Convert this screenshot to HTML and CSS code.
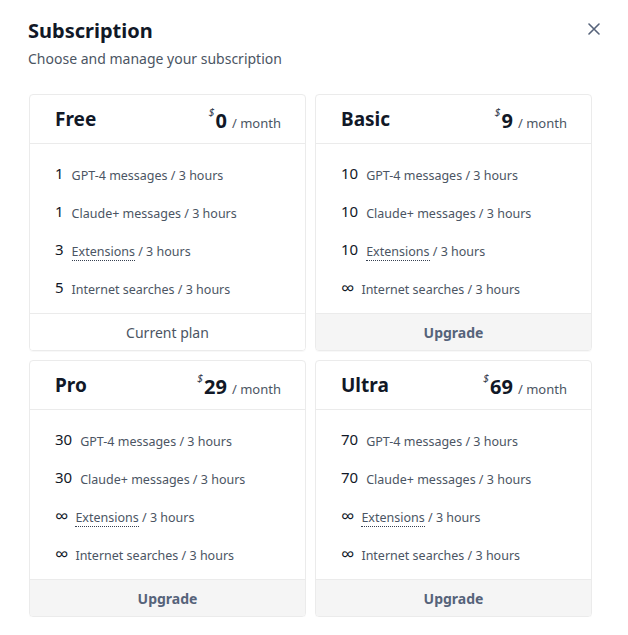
FILE: index.html
```html
<!DOCTYPE html>
<html lang="en">
<head>
<meta charset="utf-8">
<title>Subscription</title>
<link rel="stylesheet" href="styles.css">
</head>
<body>
<div class="modal">
  <div class="top">
    <div>
      <h1 class="title">Subscription</h1>
      <p class="subtitle">Choose and manage your subscription</p>
    </div>
    <button class="close" aria-label="Close">
      <svg width="12" height="12" viewBox="0 0 12 12"><path d="M1 1L11 11M11 1L1 11" stroke="#56637a" stroke-width="1.6" stroke-linecap="round"/></svg>
    </button>
  </div>
  <div class="plans">
    <div class="card">
      <div class="card-head"><span class="plan">Free</span><span class="price"><sup>$</sup><b>0</b> <span class="per">/ month</span></span></div>
      <ul class="features">
        <li><span class="num">1</span><span class="txt">GPT-4 messages / 3 hours</span></li>
        <li><span class="num">1</span><span class="txt">Claude+ messages / 3 hours</span></li>
        <li><span class="num">3</span><span class="txt"><span class="dot">Extensions</span> / 3 hours</span></li>
        <li><span class="num">5</span><span class="txt">Internet searches / 3 hours</span></li>
      </ul>
      <div class="card-foot current">Current plan</div>
    </div>
    <div class="card">
      <div class="card-head"><span class="plan">Basic</span><span class="price"><sup>$</sup><b>9</b> <span class="per">/ month</span></span></div>
      <ul class="features">
        <li><span class="num">10</span><span class="txt">GPT-4 messages / 3 hours</span></li>
        <li><span class="num">10</span><span class="txt">Claude+ messages / 3 hours</span></li>
        <li><span class="num">10</span><span class="txt"><span class="dot">Extensions</span> / 3 hours</span></li>
        <li><span class="num inf">∞</span><span class="txt">Internet searches / 3 hours</span></li>
      </ul>
      <div class="card-foot upgrade">Upgrade</div>
    </div>
    <div class="card">
      <div class="card-head"><span class="plan">Pro</span><span class="price"><sup>$</sup><b>29</b> <span class="per">/ month</span></span></div>
      <ul class="features">
        <li><span class="num">30</span><span class="txt">GPT-4 messages / 3 hours</span></li>
        <li><span class="num">30</span><span class="txt">Claude+ messages / 3 hours</span></li>
        <li><span class="num inf">∞</span><span class="txt"><span class="dot">Extensions</span> / 3 hours</span></li>
        <li><span class="num inf">∞</span><span class="txt">Internet searches / 3 hours</span></li>
      </ul>
      <div class="card-foot upgrade">Upgrade</div>
    </div>
    <div class="card">
      <div class="card-head"><span class="plan">Ultra</span><span class="price"><sup>$</sup><b>69</b> <span class="per">/ month</span></span></div>
      <ul class="features">
        <li><span class="num">70</span><span class="txt">GPT-4 messages / 3 hours</span></li>
        <li><span class="num">70</span><span class="txt">Claude+ messages / 3 hours</span></li>
        <li><span class="num inf">∞</span><span class="txt"><span class="dot">Extensions</span> / 3 hours</span></li>
        <li><span class="num inf">∞</span><span class="txt">Internet searches / 3 hours</span></li>
      </ul>
      <div class="card-foot upgrade">Upgrade</div>
    </div>
  </div>
</div>
</body>
</html>
```
FILE: styles.css
```css
* { box-sizing: border-box; }
body {
  margin: 0;
  background: #fff;
  font-family: "Noto Sans", "Open Sans", sans-serif;
  color: #111827;
}
.modal {
  padding: 17px 28px 0 28px;
  width: 628px;
}
.top {
  display: flex;
  justify-content: space-between;
  align-items: flex-start;
}
.title {
  margin: 0;
  font-size: 20px;
  line-height: 28px;
  font-weight: 700;
  color: #111827;
}
.subtitle {
  margin: 2px 0 0;
  font-size: 14px;
  line-height: 24px;
  color: #4b5563;
}
.close {
  border: 0;
  background: none;
  padding: 0;
  margin: 6px 0 0 0;
  width: 12px;
  height: 12px;
  display: flex;
}
.plans {
  margin-top: 23px;
  display: grid;
  grid-template-columns: 277px 277px;
  gap: 9px 9px;
  padding-left: 1px;
}
.card {
  border: 1px solid #ebebeb;
  border-radius: 4px;
  overflow: hidden;
  display: flex;
  flex-direction: column;
  box-shadow: 0 1px 1px rgba(0,0,0,0.03);
}
.card-head {
  height: 49px;
  border-bottom: 1px solid #ebebeb;
  display: flex;
  align-items: center;
  justify-content: space-between;
  padding: 0 24px 0 25px;
}
.plan {
  font-size: 19px;
  font-weight: 700;
  color: #111827;
}
.price {
  display: flex;
  align-items: baseline;
  margin-top: 2px;
}
.price sup {
  font-size: 11px;
  font-style: italic;
  color: #374151;
  align-self: flex-start;
  margin-top: -3px;
  margin-right: 1px;
}
.price b {
  font-size: 20px;
  font-weight: 700;
  color: #111827;
}
.per {
  font-size: 13px;
  color: #4b5563;
  margin-left: 5px;
}
.features {
  list-style: none;
  margin: 0;
  padding: 19px 25px 14px;
  display: flex;
  flex-direction: column;
  gap: 16px;
  flex: 1;
}
.features li {
  display: flex;
  align-items: flex-start;
  height: 22px;
}
.num {
  font-size: 15px;
  line-height: 20px;
  color: #111827;
  margin-right: 8px;
}
.num.inf {
  font-size: 19px;
  line-height: 20px;
  margin-top: 1px;
  margin-right: 7px;
}
.txt {
  font-size: 12.5px;
  line-height: 20px;
  color: #4b5563;
  margin-top: 3px;
}
.dot {
  border-bottom: 1.5px dotted #374151;
}
.card-foot {
  height: 37px;
  border-top: 1px solid #ebebeb;
  display: flex;
  align-items: center;
  justify-content: center;
  font-size: 14px;
}
.current {
  background: #fff;
  color: #4b5563;
}
.upgrade {
  background: #f5f5f5;
  color: #56637a;
  font-weight: 700;
}
```
